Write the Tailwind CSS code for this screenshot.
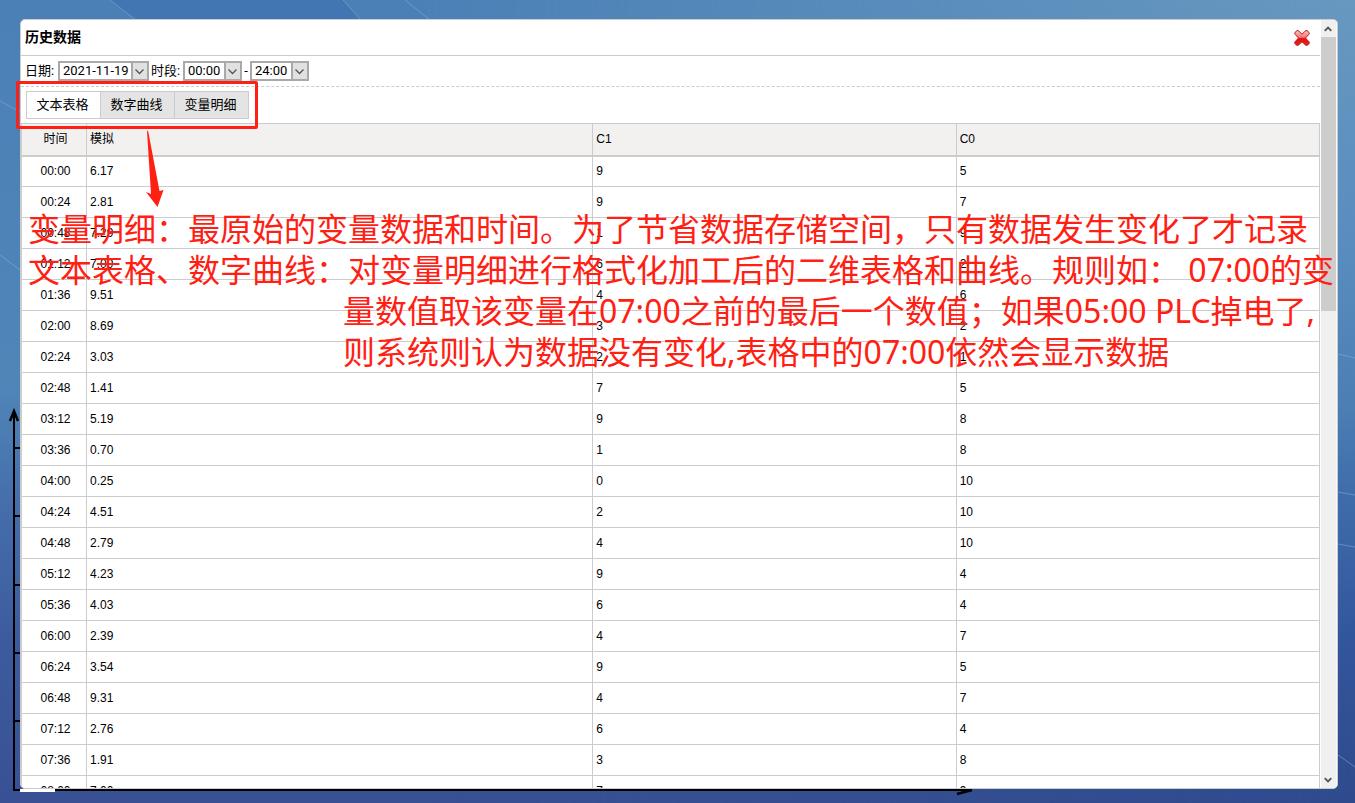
<!DOCTYPE html>
<html lang="zh-CN">
<head>
    <meta charset="UTF-8">
    <meta name="viewport" content="width=device-width, initial-scale=1.0">
    <title>历史数据</title>
    <script src="https://cdn.jsdelivr.net/npm/@tailwindcss/browser@4"></script>
</head>
<body class="relative h-screen overflow-hidden bg-[#4c83ba] text-black font-['Liberation_Sans','Noto_Sans_CJK_SC',sans-serif]">

    <!-- 背景渐变和光线 -->
    <svg class="absolute inset-0 w-full h-full" preserveAspectRatio="none" viewBox="0 0 1355 803" fill="none">
        <defs>
            <linearGradient id="bgLeft" x1="0" y1="0" x2="0" y2="1">
                <stop offset="0" stop-color="#4a80b6"/>
                <stop offset="0.48" stop-color="#4f86b8"/>
                <stop offset="0.62" stop-color="#466fac"/>
                <stop offset="0.8" stop-color="#3c5b9e"/>
                <stop offset="1" stop-color="#395194"/>
            </linearGradient>
            <linearGradient id="bgRight" x1="0" y1="0" x2="0" y2="1">
                <stop offset="0" stop-color="#6798c0"/>
                <stop offset="0.3" stop-color="#5a8dbf"/>
                <stop offset="0.5" stop-color="#4c80b4"/>
                <stop offset="0.62" stop-color="#3e6cab"/>
                <stop offset="0.8" stop-color="#33559a"/>
                <stop offset="1" stop-color="#2f4b8e"/>
            </linearGradient>
            <linearGradient id="fade">
                <stop offset="0.3" stop-color="#fff" stop-opacity="0"/>
                <stop offset="1" stop-color="#fff"/>
            </linearGradient>
            <mask id="toRight"><path d="M0 0H1355V803H0Z" fill="url(#fade)"/></mask>
        </defs>
        <path d="M0 0H1355V803H0Z" fill="url(#bgLeft)"/>
        <path d="M0 0H1355V803H0Z" fill="url(#bgRight)" mask="url(#toRight)"/>
        <path d="M110 0H343L361 20H136Z" fill="#4076b2"/>
        <g stroke="#8fb3d9" stroke-opacity="0.5">
            <path d="M110 0L136 20M343 0L361 20M405 0L430 20"/>
            <path d="M0 101L20 112M0 255L20 270"/>
            <path d="M1338 354L1355 358M1338 492L1355 495M1338 544L1355 547M1338 755L1355 767"/>
        </g>
    </svg>

    <!-- 背后的坐标轴 -->
    <svg class="absolute bottom-0 left-0 w-[980px] h-[403px]" viewBox="0 400 980 403" fill="none" stroke="#000" stroke-width="2">
        <path d="M14 411V790H972"/>
        <path d="M10 421L14 411L18 421" stroke-width="2.5"/>
        <path d="M14 448H22M14 516H22M14 585H22M14 653H22M14 721H22"/>
        <path d="M957 794L972 790" stroke-width="2.5"/>
        <path d="M20 790.5H55" stroke="#fff" stroke-width="3"/>
    </svg>

    <!-- 弹窗 -->
    <div class="relative h-full pt-[19px] pb-[14px] pl-5 pr-[17px]">
        <div class="flex h-full overflow-hidden rounded-[5px] border border-[#ccc] bg-white">
            <div class="flex-1 overflow-hidden pr-px">
                <div class="flex h-9 items-center justify-between border-b border-[#ccc] pb-0.5 pl-1 pr-[9px]">
                    <h1 class="text-sm font-bold">历史数据</h1>
                    <button type="button" aria-label="关闭" class="pt-0.5">
                        <svg class="w-[18px] h-[18px]" viewBox="0 0 18 18">
                            <defs>
                                <linearGradient id="closeRed" x1="0" y1="0" x2="0" y2="1">
                                    <stop offset="0" stop-color="#ffc0c0"/>
                                    <stop offset="0.45" stop-color="#f87878"/>
                                    <stop offset="0.55" stop-color="#e01010"/>
                                    <stop offset="1" stop-color="#f81c1c"/>
                                </linearGradient>
                            </defs>
                            <path d="M4.200 1.500Q5 1.200 6 2.200L9 5.200L12 2.200Q13 1.200 14 1.600L16 3.400Q16.700 4.200 16 5.200L12.500 9L16 12.800Q16.700 13.800 16 14.600L14.500 16.200Q13.500 16.800 12.500 16L9 12.800L5.500 16Q4.500 16.800 3.500 16.200L2 14.600Q1.300 13.800 2 12.800L5.500 9L2 5.200Q1.300 4.200 2 3.400Z" fill="url(#closeRed)" stroke="#b31a1a" stroke-linejoin="round"/>
                        </svg>
                    </button>
                </div>

                <div class="flex h-[31px] items-center border-b border-dashed border-[#ccc] pl-1 text-[13px] font-[Roboto,'Noto_Sans_CJK_SC',sans-serif]">
                    <label for="date" class="w-[33px]">日期:</label>
                    <div class="relative flex w-[91px]">
                        <select id="date" class="h-5 w-full appearance-none border-2 border-[#a9a9a9] bg-white pl-[3px] leading-4">
                            <option>2021-11-19</option>
                        </select>
                        <svg class="pointer-events-none absolute right-0 top-0 h-5 w-[18px]" viewBox="0 0 18 20" fill="none">
                            <path d="M1 1H17V19H1Z" fill="#e1e1e1" stroke="#a9a9a9" stroke-width="2"/>
                            <path d="M4.500 8.500L8.500 12.500L12.500 8.500" stroke="#555" stroke-width="1.300"/>
                        </svg>
                    </div>
                    <label for="from" class="w-[34px] pl-0.5">时段:</label>
                    <div class="relative flex w-[59px]">
                        <select id="from" class="h-5 w-full appearance-none border-2 border-[#a9a9a9] bg-white pl-[3px] leading-4">
                            <option>00:00</option>
                        </select>
                        <svg class="pointer-events-none absolute right-0 top-0 h-5 w-[18px]" viewBox="0 0 18 20" fill="none">
                            <path d="M1 1H17V19H1Z" fill="#e1e1e1" stroke="#a9a9a9" stroke-width="2"/>
                            <path d="M4.500 8.500L8.500 12.500L12.500 8.500" stroke="#555" stroke-width="1.300"/>
                        </svg>
                    </div>
                    <span class="w-2 text-center">-</span>
                    <div class="relative flex w-[59px]">
                        <select aria-label="结束时间" class="h-5 w-full appearance-none border-2 border-[#a9a9a9] bg-white pl-[3px] leading-4">
                            <option>24:00</option>
                        </select>
                        <svg class="pointer-events-none absolute right-0 top-0 h-5 w-[18px]" viewBox="0 0 18 20" fill="none">
                            <path d="M1 1H17V19H1Z" fill="#e1e1e1" stroke="#a9a9a9" stroke-width="2"/>
                            <path d="M4.500 8.500L8.500 12.500L12.500 8.500" stroke="#555" stroke-width="1.300"/>
                        </svg>
                    </div>
                </div>

                <div class="flex h-9 items-center pl-[5px] text-[13px]">
                    <button type="button" class="h-7 w-[75px] border border-[#ccc] bg-white pr-0.5">文本表格</button>
                    <button type="button" class="-ml-px h-7 w-[75px] border border-[#ccc] bg-[#e4e4e4] pr-0.5">数字曲线</button>
                    <button type="button" class="-ml-px h-7 w-[75px] border border-[#ccc] bg-[#e4e4e4] pr-0.5">变量明细</button>
                </div>

                <table class="w-full table-fixed border-collapse text-xs">
                    <thead>
                        <tr class="h-8 border border-b-2 border-[#ccc] bg-[#f2f1f0] text-left">
                            <th class="w-[65px] border-r border-[#ccc] pl-[3px] text-center font-normal">时间</th>
                            <th class="w-[39%] border-r border-[#ccc] px-[3px] font-normal">模拟</th>
                            <th class="w-[28%] border-r border-[#ccc] px-[3px] font-normal">C1</th>
                            <th class="px-[3px] font-normal">C0</th>
                        </tr>
                    </thead>
                    <tbody id="rows"></tbody>
                </table>
            </div>

            <!-- 滚动条 -->
            <div class="flex w-4 flex-col items-center border-r border-[#f8f8f8] bg-[#f0f0f0]">
                <svg class="h-[17px] w-full shrink-0" viewBox="0 0 16 17" fill="none" stroke="#555" stroke-width="2"><path d="M4 11L7.500 7.500L11 11"/></svg>
                <div class="h-[274px] w-full bg-[#cdcdcd]"></div>
                <svg class="mt-auto h-[17px] w-full shrink-0" viewBox="0 0 16 17" fill="none" stroke="#555" stroke-width="2"><path d="M4 7L7.500 10.500L11 7"/></svg>
            </div>
        </div>
    </div>

    <!-- 红色标注 -->
    <div class="absolute left-4 top-[81px] h-12 w-[242px] rounded-xs border-[3px] border-[#ff2013]"></div>
    <svg class="absolute left-[140px] top-[128px] h-20 w-8" viewBox="140 128 32 80" fill="#ff2013">
        <path d="M147 131Q148 130 148.500 133L159.500 191L163.500 190L157.500 207L146 192L151 194Z"/>
    </svg>
    <div class="absolute left-7 top-[208px] whitespace-nowrap text-[32px] leading-[41px] text-[#ff2013] font-['Noto_Sans','Noto_Sans_CJK_SC',sans-serif]">
        <p>变量明细：最原始的变量数据和时间。为了节省数据存储空间，只有数据发生变化了才记录</p>
        <p>文本表格、数字曲线：对变量明细进行格式化加工后的二维表格和曲线。规则如： 07:00的变</p>
        <div class="pl-[315px]">
            <p>量数值取该变量在07:00之前的最后一个数值；如果05:00 PLC掉电了,</p>
            <p>则系统则认为数据没有变化,表格中的07:00依然会显示数据</p>
        </div>
    </div>

    <script>
        // 时间、模拟、C1、C0
        const data = [
            ['00:00', '6.17', 9, 5],
            ['00:24', '2.81', 9, 7],
            ['00:48', '7.29', 1, 9],
            ['01:12', '7.09', 6, 2],
            ['01:36', '9.51', 4, 6],
            ['02:00', '8.69', 3, 2],
            ['02:24', '3.03', 2, 1],
            ['02:48', '1.41', 7, 5],
            ['03:12', '5.19', 9, 8],
            ['03:36', '0.70', 1, 8],
            ['04:00', '0.25', 0, 10],
            ['04:24', '4.51', 2, 10],
            ['04:48', '2.79', 4, 10],
            ['05:12', '4.23', 9, 4],
            ['05:36', '4.03', 6, 4],
            ['06:00', '2.39', 4, 7],
            ['06:24', '3.54', 9, 5],
            ['06:48', '9.31', 4, 7],
            ['07:12', '2.76', 6, 4],
            ['07:36', '1.91', 3, 8],
            ['08:00', '7.00', 7, 9]
        ];

        document.getElementById('rows').innerHTML = data.map(([time, ...values]) => `
            <tr class="h-[31px] border border-[#ccc]">
                <td class="border-r border-[#ccc] pl-[3px] text-center">${time}</td>
                ${values.map(v => `<td class="border-r border-[#ccc] px-[3px]">${v}</td>`).join('')}
            </tr>`).join('');
    </script>
</body>
</html>
